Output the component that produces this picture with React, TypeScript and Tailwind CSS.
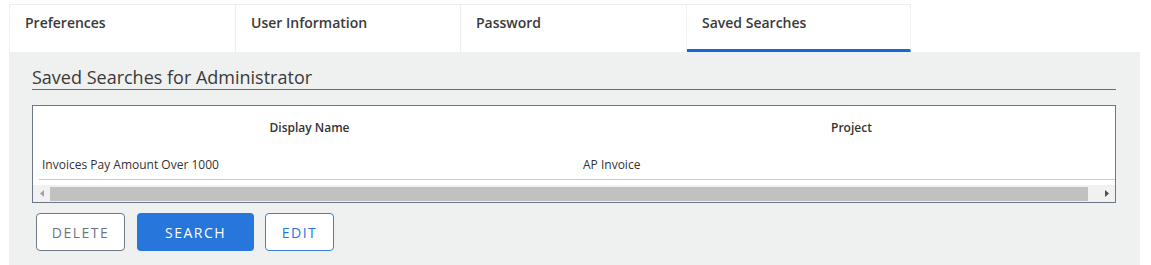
import React from "react";

const tabs = ["Preferences", "User Information", "Password", "Saved Searches"];
const widths = ["w-[226px]", "w-[225px]", "w-[226px]", "w-[224px]"];

export default function App() {
  return (
    <div
      className="w-[1151px] h-[265px] bg-white overflow-hidden pl-[9px] pt-[4px] text-[#333]"
      style={{ fontFamily: '"Open Sans", "Noto Sans", sans-serif' }}
    >
      <div className="flex border-t border-l border-[#eceeef] w-fit">
        {tabs.map((t, i) => (
          <div
            key={t}
            className={`${widths[i]} h-[47px] border-r border-[#eceeef] pl-[15px] pt-[8px] text-[14px] leading-[20px] font-semibold text-[#3a3a3a] ${
              i === 3 ? "border-b-[3px] border-b-[#1a66d6]" : ""
            }`}
          >
            {t}
          </div>
        ))}
      </div>
      <div className="w-[1131px] h-[220px] bg-[#eff0f0] pl-[23px] pr-[24px] pt-[13px]">
        <h2 className="text-[18px] leading-[24px] font-normal text-[#3a3a3a] border-b border-[#5f6d7c]">
          Saved Searches for Administrator
        </h2>
        <div className="mt-[15px] border border-[#6b7785] bg-white">
          <div className="pl-[6px]">
            <div className="flex h-[44px] items-center text-[12px] font-semibold">
              <div className="w-[541px] text-center">Display Name</div>
              <div className="flex-1 text-center pl-[8px]">Project</div>
            </div>
            <div className="flex h-[30px] items-center text-[12px] border-b border-[#c8cdd2]">
              <div className="w-[541px] pl-[3px] pt-[1px]">Invoices Pay Amount Over 1000</div>
              <div className="flex-1 pl-[3px] pt-[1px]">AP Invoice</div>
            </div>
          </div>
          <div className="mt-[5px] h-[17px] bg-[#f1f1f1] flex items-center">
            <div className="w-[17px] h-full flex items-center justify-center">
              <svg width="4" height="7" viewBox="0 0 4 7">
                <polygon points="4,0 4,7 0,3.5" fill="#a3a3a3" />
              </svg>
            </div>
            <div className="w-[1038px] h-[14px] bg-[#c1c1c1]" />
            <div className="flex-1" />
            <div className="w-[17px] h-full flex items-center justify-center">
              <svg width="4" height="7" viewBox="0 0 4 7">
                <polygon points="0,0 0,7 4,3.5" fill="#505050" />
              </svg>
            </div>
          </div>
        </div>
        <div className="flex mt-[10px] ml-[4px]">
          <button className="w-[89px] h-[38px] rounded-[4px] border border-[#6c7a89] bg-white text-[14px] tracking-[1.5px] text-[#6b7683]">
            DELETE
          </button>
          <button className="ml-[12px] w-[117px] h-[38px] rounded-[4px] bg-[#2676dc] text-white text-[14px] tracking-[1.5px]">
            SEARCH
          </button>
          <button className="ml-[11px] w-[69px] h-[38px] rounded-[4px] border border-[#3a7fdc] bg-white text-[14px] tracking-[1.5px] text-[#2676dc]">
            EDIT
          </button>
        </div>
      </div>
    </div>
  );
}
